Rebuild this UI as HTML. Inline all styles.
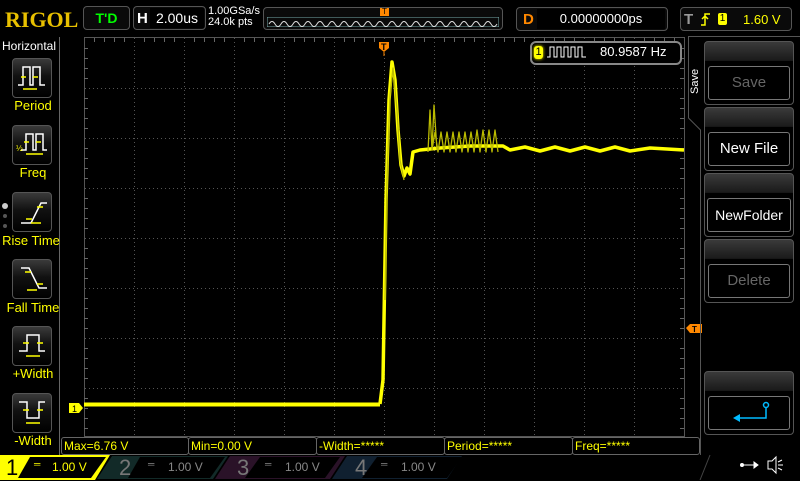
<!DOCTYPE html>
<html><head><meta charset="utf-8"><style>
body{margin:0;width:800px;height:480px;background:#000;overflow:hidden;position:relative;font-family:"Liberation Sans",sans-serif}
.a{position:absolute}
.box{position:absolute;border:1px solid #555;border-radius:4px;background:#0a0a0a}
.btn{position:absolute;left:12px;width:38px;height:38px;border:1px solid #555;border-radius:4px;background:linear-gradient(#3a3a3a,#111 45%,#000)}
.lbl{position:absolute;color:#ff0;font-size:13px;text-align:center;width:66px;left:0}
.rb{position:absolute;left:704px;width:88px;height:62px;border:1px solid #555;border-radius:4px;background:linear-gradient(#3a3a3a,#1a1a1a 30%,#000 31%)}
.rb div{position:absolute;left:3px;top:24px;width:80px;height:32px;border:1px solid #777;border-radius:3px;color:#fff;font-size:15px;text-align:center;line-height:32px}
.m{position:absolute;top:437px;height:16px;border:1px solid #666;border-radius:3px;color:#ff0;font-size:12px;line-height:16px;padding-left:2px}
</style></head><body>
<div class="a" style="left:5px;top:7px;color:#e8c000;font:bold 22px 'Liberation Serif',serif;letter-spacing:0px">RIGOL</div>
<div class="box" style="left:83px;top:6px;width:45px;height:22px;color:#0f0;font-weight:bold;font-size:14px;text-align:center;line-height:22px">T'D</div>
<div class="box" style="left:133px;top:6px;width:71px;height:22px"><span class="a" style="left:3px;top:3px;color:#fff;font-weight:bold;font-size:15px">H</span><div class="a" style="left:16px;top:1px;width:54px;height:20px;background:#000;color:#fff;font-size:14px;line-height:20px;text-align:center">2.00us</div></div>
<div class="a" style="left:208px;top:6px;color:#fff;font-size:11px;line-height:11px">1.00GSa/s<br>24.0k pts</div>
<div class="box" style="left:263px;top:7px;width:238px;height:21px">
<svg class="a" style="left:3px;top:9px" width="232" height="10"><rect x="0" y="0" width="232" height="10" fill="none" stroke="#7aa" stroke-width="1"/><path d="M2 7 q3 -5 6 0 t6 0 t6 0 t6 0 t6 0 t6 0 t6 0 t6 0 t6 0 t6 0 t6 0 t6 0 t6 0 t6 0 t6 0 t6 0 t6 0 t6 0 t6 0 t6 0 t6 0 t6 0 t6 0 t6 0 t6 0 t6 0 t6 0 t6 0 t6 0 t6 0 t6 0 t6 0 t6 0 t6 0 t6 0 t6 0 t6 0 t6 0" fill="none" stroke="#ddd"/></svg>
<div class="a" style="left:116px;top:0;width:9px;height:8px;background:#f80;color:#000;font-size:8px;text-align:center;line-height:8px">T</div></div>
<div class="box" style="left:516px;top:7px;width:150px;height:22px"><span class="a" style="left:6px;top:3px;color:#f80;font-weight:bold;font-size:15px">D</span><div class="a" style="left:20px;top:1px;width:128px;height:20px;background:#000;color:#fff;font-size:13px;line-height:20px;text-align:center">0.00000000ps</div></div>
<div class="box" style="left:680px;top:7px;width:110px;height:22px"><span class="a" style="left:3px;top:3px;color:#999;font-weight:bold;font-size:15px">T</span><svg class="a" style="left:18px;top:4px" width="12" height="14"><path d="M2 13h4V2h5M3 7l3-3l3 3" fill="none" stroke="#ff0" stroke-width="1.5"/></svg><span class="a" style="left:37px;top:5px;width:9px;height:12px;background:#ff0;border-radius:2px;font-size:10px;text-align:center;line-height:12px">1</span><span class="a" style="left:62px;top:4px;color:#ff0;font-size:13px">1.60 V</span></div>
<!-- left panel -->
<div class="a" style="left:0;top:37px;width:59px;height:418px;border-right:1px solid #666"></div>
<div class="a" style="left:2px;top:39px;color:#fff;font-size:12px">Horizontal</div>
<div class="btn" style="top:58px"><svg width="38" height="38"><path d="M5 26h5V8h7v18h3V8h7v18h5" fill="none" stroke="#fff" stroke-width="1.5"/><path d="M8 18h5M20 18h5M10 30h14" stroke="#ff0" stroke-width="1.5"/></svg></div>
<div class="lbl" style="top:98px">Period</div>
<div class="btn" style="top:125px"><svg width="38" height="38"><path d="M8 24h5V8h7v16h3V8h7v16h4" fill="none" stroke="#fff" stroke-width="1.5"/><path d="M11 16h5M23 16h5M13 28h17" stroke="#ff0" stroke-width="1.5"/><text x="3" y="25" fill="#ff0" font-size="8">½</text></svg></div>
<div class="lbl" style="top:165px">Freq</div>
<div class="a" style="left:2px;top:203px;width:6px;height:6px;border-radius:3px;background:#ccc"></div>
<div class="a" style="left:3px;top:214px;width:4px;height:4px;border-radius:2px;background:#555"></div>
<div class="a" style="left:3px;top:224px;width:4px;height:4px;border-radius:2px;background:#555"></div>
<div class="btn" style="top:192px"><svg width="38" height="38"><path d="M8 30h10l10-20h6" fill="none" stroke="#fff" stroke-width="1.5"/><path d="M24 14h6M13 26h6M18 30h10" stroke="#ff0" stroke-width="1.5"/></svg></div>
<div class="lbl" style="top:233px;left:-2px;width:66px">Rise Time</div>
<div class="btn" style="top:259px"><svg width="38" height="38"><path d="M8 8h8l10 20h8" fill="none" stroke="#fff" stroke-width="1.5"/><path d="M12 12h6M24 24h6M14 30h10" stroke="#ff0" stroke-width="1.5"/></svg></div>
<div class="lbl" style="top:300px">Fall Time</div>
<div class="btn" style="top:326px"><svg width="38" height="38"><path d="M6 24h8V8h12v16h6" fill="none" stroke="#fff" stroke-width="1.5"/><path d="M10 16h6M24 16h6M13 29h14" stroke="#ff0" stroke-width="1.5"/></svg></div>
<div class="lbl" style="top:366px">+Width</div>
<div class="btn" style="top:393px"><svg width="38" height="38"><path d="M6 8h8v16h12V8h6" fill="none" stroke="#fff" stroke-width="1.5"/><path d="M10 16h6M24 16h6M13 29h14" stroke="#ff0" stroke-width="1.5"/></svg></div>
<div class="lbl" style="top:433px">-Width</div>
<!-- grid -->
<svg class="a" style="left:0;top:0" width="800" height="480">
<rect x="84.5" y="37.5" width="600" height="399" fill="none" stroke="#555"/>
<g stroke="#555" stroke-dasharray="1,3">
<path d="M134.5 38V436M184.5 38V436M234.5 38V436M284.5 38V436M334.5 38V436M384.5 38V436M434.5 38V436M484.5 38V436M534.5 38V436M584.5 38V436M634.5 38V436"/>
<path d="M85 88.5H684M85 138.5H684M85 188.5H684M85 238.5H684M85 288.5H684M85 338.5H684M85 388.5H684"/>
</g>
<g stroke="#666">
<path d="M84 48.5h4M84 58.5h4M84 68.5h4M84 78.5h4M84 98.5h4M84 108.5h4M84 118.5h4M84 128.5h4M84 148.5h4M84 158.5h4M84 168.5h4M84 178.5h4M84 198.5h4M84 208.5h4M84 218.5h4M84 228.5h4M84 248.5h4M84 258.5h4M84 268.5h4M84 278.5h4M84 298.5h4M84 308.5h4M84 318.5h4M84 328.5h4M84 348.5h4M84 358.5h4M84 368.5h4M84 378.5h4M84 398.5h4M84 408.5h4M84 418.5h4M84 428.5h4"/>
<path d="M680 48.5h4M680 58.5h4M680 68.5h4M680 78.5h4M680 98.5h4M680 108.5h4M680 118.5h4M680 128.5h4M680 148.5h4M680 158.5h4M680 168.5h4M680 178.5h4M680 198.5h4M680 208.5h4M680 218.5h4M680 228.5h4M680 248.5h4M680 258.5h4M680 268.5h4M680 278.5h4M680 298.5h4M680 308.5h4M680 318.5h4M680 328.5h4M680 348.5h4M680 358.5h4M680 368.5h4M680 378.5h4M680 398.5h4M680 408.5h4M680 418.5h4M680 428.5h4"/>
<path d="M94.5 38v4M104.5 38v4M114.5 38v4M124.5 38v4M144.5 38v4M154.5 38v4M164.5 38v4M174.5 38v4M194.5 38v4M204.5 38v4M214.5 38v4M224.5 38v4M244.5 38v4M254.5 38v4M264.5 38v4M274.5 38v4M294.5 38v4M304.5 38v4M314.5 38v4M324.5 38v4M344.5 38v4M354.5 38v4M364.5 38v4M374.5 38v4M394.5 38v4M404.5 38v4M414.5 38v4M424.5 38v4M444.5 38v4M454.5 38v4M464.5 38v4M474.5 38v4M494.5 38v4M504.5 38v4M514.5 38v4M524.5 38v4M544.5 38v4M554.5 38v4M564.5 38v4M574.5 38v4M594.5 38v4M604.5 38v4M614.5 38v4M624.5 38v4M644.5 38v4M654.5 38v4M664.5 38v4M674.5 38v4"/>
</g>
<!-- waveform -->
<g fill="none" stroke="#ff0" stroke-linejoin="round">
<path d="M84 404.5H380" stroke-width="4"/>
<path d="M380 404 L383 380 L386 200 L389 100 L392 62 L395 80 L398 130 L401 165 L404 176 L407 168 L410 174 L413 152 L420 150 L440 148 L470 146 L495 146 L503 146 L510 150 L525 147 L540 151 L555 147 L570 151 L585 147 L600 151 L615 147 L630 151 L650 148 L684 150" stroke-width="3.5"/>
<path d="M385 300 L387 180 L390 95 L393 68 L397 110 L400 160 L404 180 M428 152 L430 110 L432 150 L434 105 L437 150 M432 150 l3 -18 l3 20 l3 -20 l3 20 l3 -20 l3 20 l3 -20 l3 20 l3 -20 l3 20 l3 -20 l3 20 l3 -20 l3 20 l3 -22 l3 22 l3 -22 l3 22 l3 -22 l3 22 l3 -22 l3 22" stroke-width="1.3" stroke="#bb0"/>
</g>
<!-- trigger markers -->
<path d="M379 42h10v6l-5 4l-5-4z" fill="#f80"/><text x="381" y="50" font-size="9" fill="#000" font-family="Liberation Sans" font-weight="bold">T</text>
<path d="M384 52v4" stroke="#f80"/>
<path d="M686 328l4-4h12v9h-12z" fill="#f80"/><text x="692" y="332" font-size="8" fill="#000" font-family="Liberation Sans" font-weight="bold">T</text>
<path d="M69 403h10l4 5l-4 5h-10z" fill="#ff0"/><text x="72" y="412" font-size="9" fill="#000" font-family="Liberation Sans">1</text>
<!-- right panel frame -->
<path d="M688 36.5H800M688.5 36V118l12 12V455" fill="none" stroke="#555"/>
<!-- bottom channel bar -->
<path d="M0 455H110L95 480H0Z" fill="#ff0"/>
<path d="M30 457H106L91 478H18Z" fill="#000"/>
<path d="M112 456H228L213 479H97Z" fill="#122a28"/>
<path d="M140 457H225L210 478H128Z" fill="#000"/>
<path d="M230 456H345L330 479H215Z" fill="#2a1228"/>
<path d="M260 457H340L325 478H245Z" fill="#000"/>
<path d="M347 456H462L447 479H332Z" fill="#102030"/>
<path d="M377 457H462L447 478H362Z" fill="#000"/>
<path d="M710 455L700 480" stroke="#444"/>
<path d="M742 465h12M754 462v6l4-3z" stroke="#fff" fill="#fff"/><circle cx="742" cy="465" r="2" fill="#fff"/>
<path d="M768 461h4l4-4v16l-4-4h-4z" fill="none" stroke="#fff"/><path d="M778 462l4-2M778 465h5M778 468l4 2" stroke="#fff"/>
</svg>
<div class="a" style="left:6px;top:455px;color:#000;font-size:22px">1</div>
<div class="a" style="left:34px;top:459px;color:#ff0;font-size:9px">═</div>
<div class="a" style="left:52px;top:460px;color:#ff0;font-size:12px">1.00 V</div>
<div class="a" style="left:119px;top:455px;color:#777;font-size:22px">2</div>
<div class="a" style="left:148px;top:459px;color:#888;font-size:9px">═</div>
<div class="a" style="left:168px;top:460px;color:#888;font-size:12px">1.00 V</div>
<div class="a" style="left:237px;top:455px;color:#777;font-size:22px">3</div>
<div class="a" style="left:265px;top:459px;color:#888;font-size:9px">═</div>
<div class="a" style="left:285px;top:460px;color:#888;font-size:12px">1.00 V</div>
<div class="a" style="left:355px;top:455px;color:#777;font-size:22px">4</div>
<div class="a" style="left:381px;top:459px;color:#888;font-size:9px">═</div>
<div class="a" style="left:401px;top:460px;color:#888;font-size:12px">1.00 V</div>
<!-- measurements -->
<div class="m" style="left:61px;width:124px">Max=6.76 V</div>
<div class="m" style="left:188px;width:125px">Min=0.00 V</div>
<div class="m" style="left:316px;width:125px">-Width=*****</div>
<div class="m" style="left:444px;width:125px">Period=*****</div>
<div class="m" style="left:572px;width:124px">Freq=*****</div>
<!-- freq counter -->
<div class="a" style="left:530px;top:41px;width:148px;height:20px;border:2px solid #888;border-radius:6px;background:#000"></div>
<div class="a" style="left:534px;top:46px;width:9px;height:13px;background:#ff0;border-radius:3px;font-size:11px;text-align:center;line-height:13px;box-shadow:0 0 3px #ff0">1</div>
<svg class="a" style="left:547px;top:46px" width="44" height="12"><path d="M0 11h3V1h4v10h3V1h4v10h3V1h4v10h3V1h4v10h3V1h4v10h4" fill="none" stroke="#fff"/></svg>
<div class="a" style="left:600px;top:44px;color:#fff;font-size:13px">80.9587 Hz</div>
<!-- right buttons -->
<div class="a" style="color:#fff;font-size:11px;transform:rotate(-90deg);transform-origin:left top;top:94px;left:689px">Save</div>
<div class="rb" style="top:41px"><div style="color:#666">Save</div></div>
<div class="rb" style="top:107px"><div>New File</div></div>
<div class="rb" style="top:173px"><div style="font-size:14px;left:2px;width:82px">NewFolder</div></div>
<div class="rb" style="top:239px"><div style="color:#666">Delete</div></div>
<div class="rb" style="top:371px"><div><svg width="80" height="32"><path d="M57 10v11H30" fill="none" stroke="#0bf" stroke-width="1.5"/><circle cx="57" cy="8" r="2.5" fill="none" stroke="#0bf" stroke-width="1.5"/><path d="M24 21l7-4v8z" fill="#0bf"/></svg></div></div>
</body></html>
